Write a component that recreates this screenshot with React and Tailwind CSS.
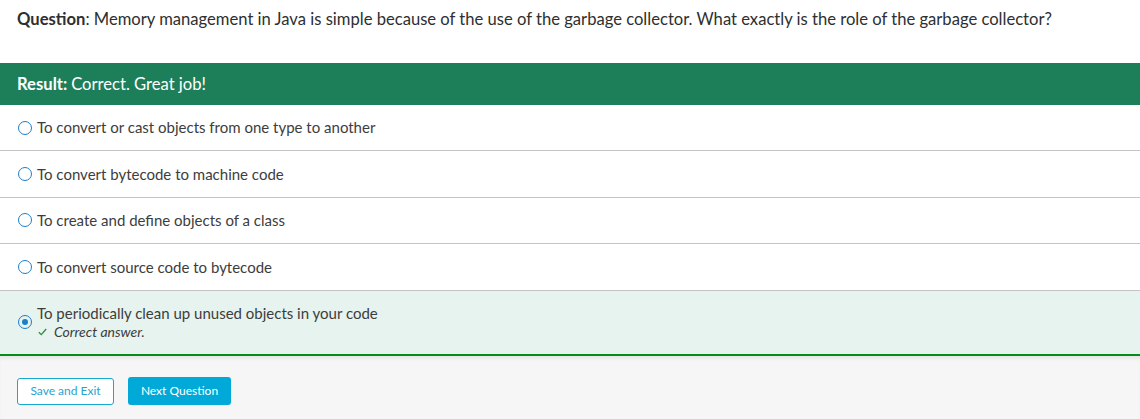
import React from "react";

const options = [
  "To convert or cast objects from one type to another",
  "To convert bytecode to machine code",
  "To create and define objects of a class",
  "To convert source code to bytecode",
];

const Radio = ({ checked }) => (
  <span className="flex h-[14px] w-[14px] shrink-0 items-center justify-center rounded-full border-[1.5px] border-[#1e7ec8]">
    {checked && <span className="h-[6px] w-[6px] rounded-full bg-[#1e7ec8]"></span>}
  </span>
);

const App = () => {
  return (
    <div className="min-h-[419px] bg-white font-['Lato','Noto_Sans',sans-serif] text-[#3d3d3d]">
      <div className="px-[17px] pt-[7px] text-[16.6px] leading-[24px] text-[#2d2f31]">
        <span className="font-bold">Question</span>: Memory management in Java is simple because of the use of the garbage collector. What exactly is the role of the garbage collector?
      </div>

      <div className="mt-[32px] flex h-[42px] items-center bg-[#1d7f5a] px-[17px] text-[16.6px] text-white">
        <span className="font-bold">Result:</span>
        <span className="ml-[4px]">Correct. Great job!</span>
      </div>

      <div>
        {options.map((opt) => (
          <div
            key={opt}
            className="flex h-[46.4px] items-center gap-[5px] border-b border-[#c4c4c4] pl-[18px] text-[15px]"
          >
            <Radio />
            <span>{opt}</span>
          </div>
        ))}
        <div className="flex h-[65px] items-center gap-[5px] border-b-2 border-[#0a8a1c] bg-[#e6f3ee] pl-[18px]">
          <Radio checked />
          <div className="flex flex-col">
            <span className="text-[15px] leading-[20px]">To periodically clean up unused objects in your code</span>
            <span className="flex items-center gap-[7px] text-[14px] italic leading-[18px] text-[#3d3d3d]">
              <svg width="9" height="8" viewBox="0 0 9 8" fill="none" className="ml-[1px]">
                <path d="M0.8 4.2 L3.3 6.6 L8.2 1" stroke="#2e8b3a" strokeWidth="1.3" />
              </svg>
              Correct answer.
            </span>
          </div>
        </div>
      </div>

      <div className="flex h-[64px] items-start gap-[14px] bg-[#f6f6f6] px-[17px] pt-[22px] shadow-[inset_0_4px_4px_-2px_rgba(0,0,0,0.08)]">
        <button className="h-[27px] w-[97px] rounded-[3px] border border-[#1aa7d4] bg-white text-[12px] text-[#2aa3cf]">
          Save and Exit
        </button>
        <button className="-mt-px h-[28px] w-[103px] rounded-[3px] bg-[#00a9d8] text-[12px] text-white">
          Next Question
        </button>
      </div>
    </div>
  );
};

export default App;
